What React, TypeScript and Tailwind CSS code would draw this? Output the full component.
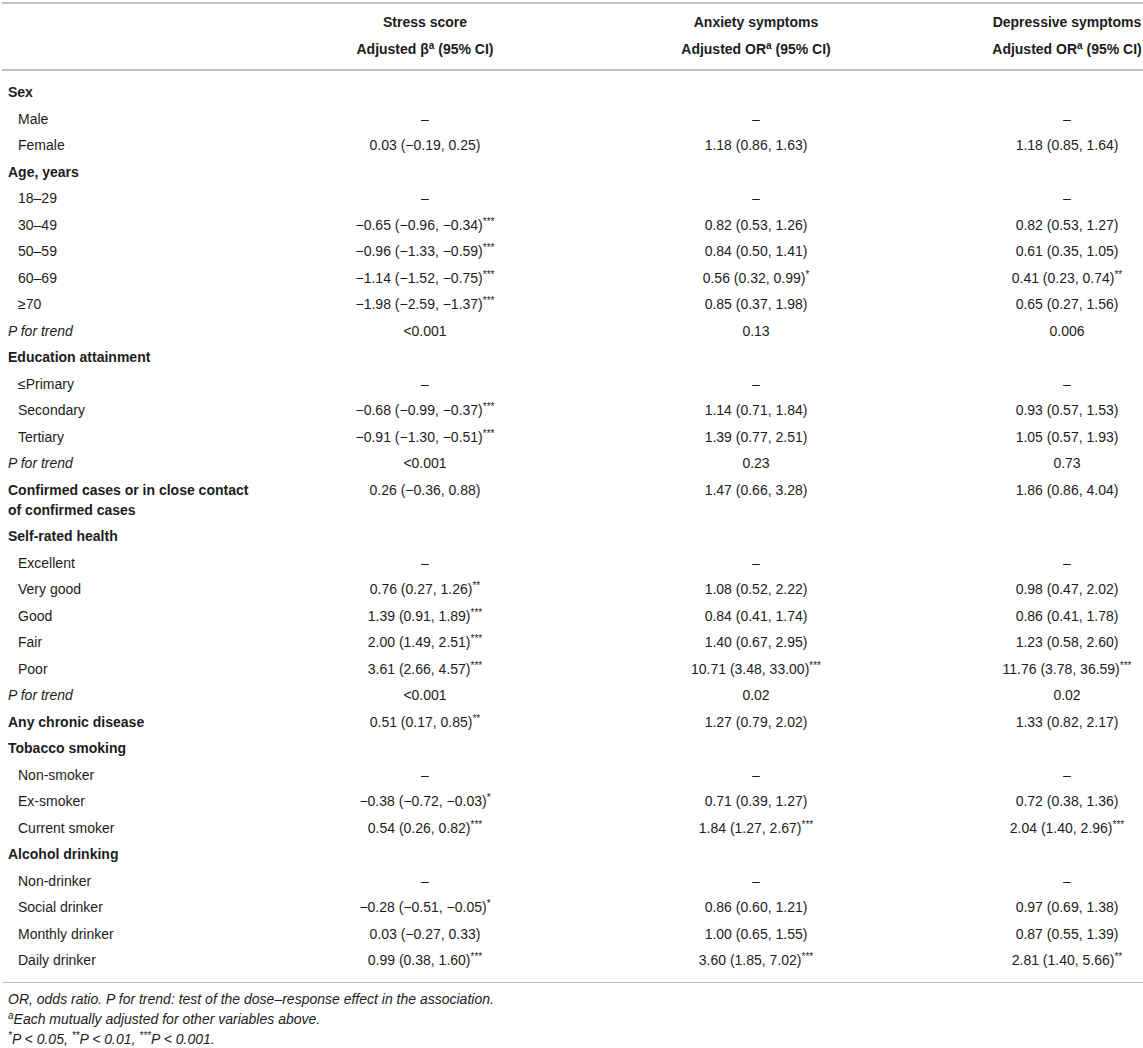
import React from 'react';

type Row = {
  label: string;
  kind: 'head' | 'sub' | 'trend';
  stress?: string;
  anx?: string;
  dep?: string;
};

const D = '–';

const rows: Row[] = [
  { label: 'Sex', kind: 'head' },
  { label: 'Male', kind: 'sub', stress: D, anx: D, dep: D },
  { label: 'Female', kind: 'sub', stress: '0.03 (−0.19, 0.25)', anx: '1.18 (0.86, 1.63)', dep: '1.18 (0.85, 1.64)' },
  { label: 'Age, years', kind: 'head' },
  { label: '18–29', kind: 'sub', stress: D, anx: D, dep: D },
  { label: '30–49', kind: 'sub', stress: '−0.65 (−0.96, −0.34)***', anx: '0.82 (0.53, 1.26)', dep: '0.82 (0.53, 1.27)' },
  { label: '50–59', kind: 'sub', stress: '−0.96 (−1.33, −0.59)***', anx: '0.84 (0.50, 1.41)', dep: '0.61 (0.35, 1.05)' },
  { label: '60–69', kind: 'sub', stress: '−1.14 (−1.52, −0.75)***', anx: '0.56 (0.32, 0.99)*', dep: '0.41 (0.23, 0.74)**' },
  { label: '≥70', kind: 'sub', stress: '−1.98 (−2.59, −1.37)***', anx: '0.85 (0.37, 1.98)', dep: '0.65 (0.27, 1.56)' },
  { label: 'P for trend', kind: 'trend', stress: '<0.001', anx: '0.13', dep: '0.006' },
  { label: 'Education attainment', kind: 'head' },
  { label: '≤Primary', kind: 'sub', stress: D, anx: D, dep: D },
  { label: 'Secondary', kind: 'sub', stress: '−0.68 (−0.99, −0.37)***', anx: '1.14 (0.71, 1.84)', dep: '0.93 (0.57, 1.53)' },
  { label: 'Tertiary', kind: 'sub', stress: '−0.91 (−1.30, −0.51)***', anx: '1.39 (0.77, 2.51)', dep: '1.05 (0.57, 1.93)' },
  { label: 'P for trend', kind: 'trend', stress: '<0.001', anx: '0.23', dep: '0.73' },
  { label: 'Confirmed cases or in close contact of confirmed cases', kind: 'head', stress: '0.26 (−0.36, 0.88)', anx: '1.47 (0.66, 3.28)', dep: '1.86 (0.86, 4.04)' },
  { label: 'Self-rated health', kind: 'head' },
  { label: 'Excellent', kind: 'sub', stress: D, anx: D, dep: D },
  { label: 'Very good', kind: 'sub', stress: '0.76 (0.27, 1.26)**', anx: '1.08 (0.52, 2.22)', dep: '0.98 (0.47, 2.02)' },
  { label: 'Good', kind: 'sub', stress: '1.39 (0.91, 1.89)***', anx: '0.84 (0.41, 1.74)', dep: '0.86 (0.41, 1.78)' },
  { label: 'Fair', kind: 'sub', stress: '2.00 (1.49, 2.51)***', anx: '1.40 (0.67, 2.95)', dep: '1.23 (0.58, 2.60)' },
  { label: 'Poor', kind: 'sub', stress: '3.61 (2.66, 4.57)***', anx: '10.71 (3.48, 33.00)***', dep: '11.76 (3.78, 36.59)***' },
  { label: 'P for trend', kind: 'trend', stress: '<0.001', anx: '0.02', dep: '0.02' },
  { label: 'Any chronic disease', kind: 'head', stress: '0.51 (0.17, 0.85)**', anx: '1.27 (0.79, 2.02)', dep: '1.33 (0.82, 2.17)' },
  { label: 'Tobacco smoking', kind: 'head' },
  { label: 'Non-smoker', kind: 'sub', stress: D, anx: D, dep: D },
  { label: 'Ex-smoker', kind: 'sub', stress: '−0.38 (−0.72, −0.03)*', anx: '0.71 (0.39, 1.27)', dep: '0.72 (0.38, 1.36)' },
  { label: 'Current smoker', kind: 'sub', stress: '0.54 (0.26, 0.82)***', anx: '1.84 (1.27, 2.67)***', dep: '2.04 (1.40, 2.96)***' },
  { label: 'Alcohol drinking', kind: 'head' },
  { label: 'Non-drinker', kind: 'sub', stress: D, anx: D, dep: D },
  { label: 'Social drinker', kind: 'sub', stress: '−0.28 (−0.51, −0.05)*', anx: '0.86 (0.60, 1.21)', dep: '0.97 (0.69, 1.38)' },
  { label: 'Monthly drinker', kind: 'sub', stress: '0.03 (−0.27, 0.33)', anx: '1.00 (0.65, 1.55)', dep: '0.87 (0.55, 1.39)' },
  { label: 'Daily drinker', kind: 'sub', stress: '0.99 (0.38, 1.60)***', anx: '3.60 (1.85, 7.02)***', dep: '2.81 (1.40, 5.66)**' },
];

// splits trailing significance stars off into a superscript
const Value: React.FC<{ v?: string }> = ({ v }) => {
  if (!v) return null;
  const m = v.match(/^(.*?)(\*+)$/);
  if (!m) return <>{v}</>;
  return (
    <>
      {m[1]}
      <sup className="text-[10px] -top-[5px]">{m[2]}</sup>
    </>
  );
};

const labelClass = (kind: Row['kind']) => {
  if (kind === 'head') return 'font-bold pl-2';
  if (kind === 'trend') return 'italic pl-2';
  return 'pl-[18px]';
};

const cols = 'grid grid-cols-[250px_350px_312px_231px]';
const lastCol = 'justify-self-end mr-[1px] w-[150px] text-center whitespace-nowrap';

const App: React.FC = () => {
  return (
    <div className="w-[1143px] bg-white text-[#1c1c1c] text-[14px] leading-5 font-['Liberation_Sans',Arial,sans-serif]">
      <div className="h-[2px] bg-[#c2c2c2] mt-[2px] ml-[2px]" />
      <div className={`${cols} font-bold pt-[5px] pb-[6px]`}>
        <div />
        <div className="text-center leading-[27px]">
          <div>Stress score</div>
          <div>
            Adjusted β<sup className="text-[10px]">a</sup> (95% CI)
          </div>
        </div>
        <div className="text-center leading-[27px]">
          <div>Anxiety symptoms</div>
          <div>
            Adjusted OR<sup className="text-[10px]">a</sup> (95% CI)
          </div>
        </div>
        <div className={`${lastCol} leading-[27px]`}>
          <div>Depressive symptoms</div>
          <div>
            Adjusted OR<sup className="text-[10px]">a</sup> (95% CI)
          </div>
        </div>
      </div>
      <div className="h-[2px] bg-[#c2c2c2] ml-[2px]" />
      <div className="pt-[8px] pb-[8px]">
        {rows.map((r, i) => (
          <div key={i} className={`${cols} py-[3.25px]`}>
            <div className={labelClass(r.kind)}>{r.label}</div>
            <div className="text-center whitespace-nowrap">
              <Value v={r.stress} />
            </div>
            <div className="text-center whitespace-nowrap">
              <Value v={r.anx} />
            </div>
            <div className={lastCol}>
              <Value v={r.dep} />
            </div>
          </div>
        ))}
      </div>
      <div className="h-px bg-[#bdbdbd] ml-[2px]" />
      <div className="italic text-[14px] leading-5 pl-2 pt-[6px]">
        <div>OR, odds ratio. P for trend: test of the dose–response effect in the association.</div>
        <div>
          <sup className="text-[10px]">a</sup>Each mutually adjusted for other variables above.
        </div>
        <div>
          <sup className="text-[10px]">*</sup>P &lt; 0.05, <sup className="text-[10px]">**</sup>P &lt; 0.01,{' '}
          <sup className="text-[10px]">***</sup>P &lt; 0.001.
        </div>
      </div>
    </div>
  );
};

export default App;
